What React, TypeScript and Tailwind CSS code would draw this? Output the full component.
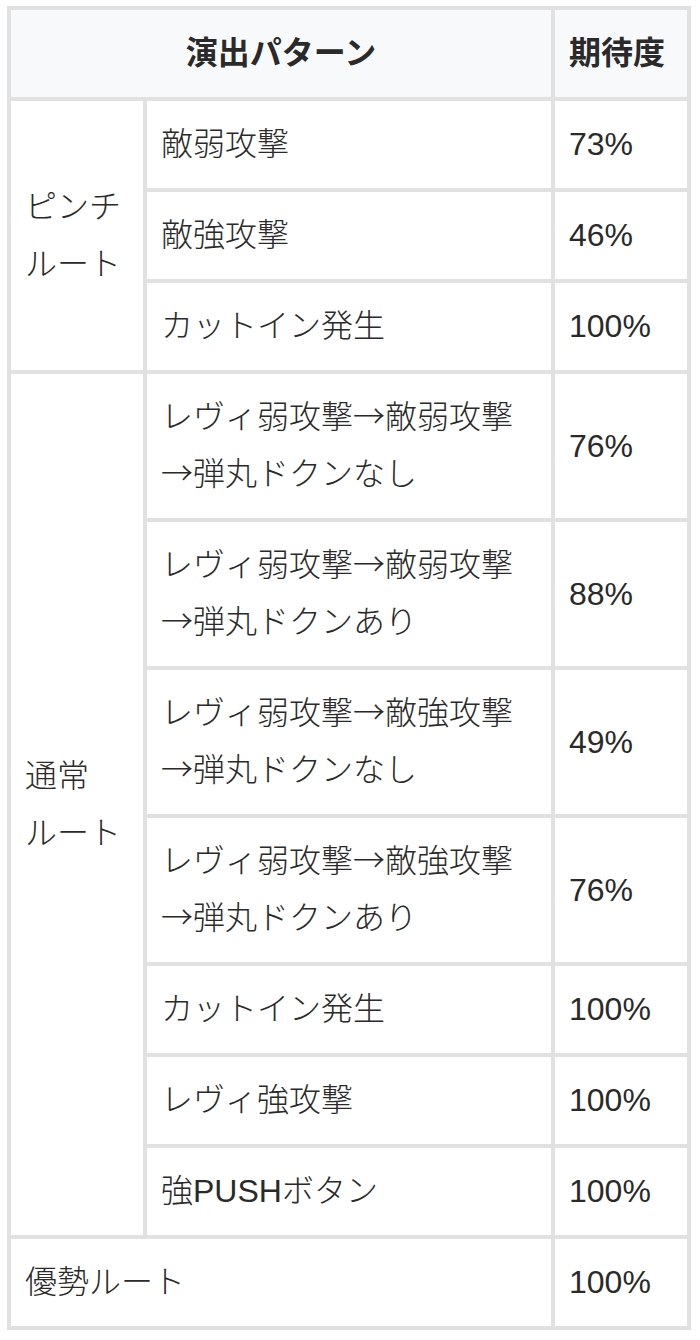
const rows: Array<{ group?: { label: string[]; span: number }; pattern: string[]; rate: string }> = [
  { group: { label: ["ピンチ", "ルート"], span: 3 }, pattern: ["敵弱攻撃"], rate: "73%" },
  { pattern: ["敵強攻撃"], rate: "46%" },
  { pattern: ["カットイン発生"], rate: "100%" },
  { group: { label: ["通常", "ルート"], span: 7 }, pattern: ["レヴィ弱攻撃→敵弱攻撃", "→弾丸ドクンなし"], rate: "76%" },
  { pattern: ["レヴィ弱攻撃→敵弱攻撃", "→弾丸ドクンあり"], rate: "88%" },
  { pattern: ["レヴィ弱攻撃→敵強攻撃", "→弾丸ドクンなし"], rate: "49%" },
  { pattern: ["レヴィ弱攻撃→敵強攻撃", "→弾丸ドクンあり"], rate: "76%" },
  { pattern: ["カットイン発生"], rate: "100%" },
  { pattern: ["レヴィ強攻撃"], rate: "100%" },
  { pattern: ["強PUSHボタン"], rate: "100%" },
];

const cell = "border-r-4 border-b-4 border-[#e1e1e1] px-[14px] py-[15px] align-middle";

// arrows come out tiny in Liberation Sans, so give them the CJK font
function Text({ text }: { text: string }) {
  const parts = text.split("→");
  return (
    <>
      {parts.map((p, i) => (
        <span key={i}>
          {i > 0 && (
            <span className="leading-none" style={{ fontFamily: '"Noto Sans CJK JP", sans-serif' }}>
              →
            </span>
          )}
          {p}
        </span>
      ))}
    </>
  );
}

function Lines({ lines }: { lines: string[] }) {
  return (
    <>
      {lines.map((l, i) => (
        <span key={i}>
          {i > 0 && <br />}
          <Text text={l} />
        </span>
      ))}
    </>
  );
}

export default function App() {
  return (
    <div className="bg-white w-[700px] h-[1340px] pt-[6px] pl-[7px]">
      <table
        className="w-[684px] border-separate border-spacing-0 border-l-4 border-t-4 border-[#e1e1e1] text-[32px] leading-[57px] text-[#2a2a2a] table-fixed"
        style={{ fontFamily: '"Liberation Sans", "Noto Sans CJK JP", sans-serif' }}
      >
        <colgroup>
          <col className="w-[136px]" />
          <col className="w-[408px]" />
          <col className="w-[136px]" />
        </colgroup>
        <thead>
          <tr className="bg-[#f8f9fa]">
            <th colSpan={2} className={`${cell} text-center font-bold`}>
              演出パターン
            </th>
            <th className={`${cell} text-left font-bold`}>期待度</th>
          </tr>
        </thead>
        <tbody className="font-light">
          {rows.map((r, i) => (
            <tr key={i}>
              {r.group && (
                <td rowSpan={r.group.span} className={`${cell} text-left`}>
                  <Lines lines={r.group.label} />
                </td>
              )}
              <td className={cell}>
                <Lines lines={r.pattern} />
              </td>
              <td className={cell}>{r.rate}</td>
            </tr>
          ))}
          <tr>
            <td colSpan={2} className={cell}>
              優勢ルート
            </td>
            <td className={cell}>100%</td>
          </tr>
        </tbody>
      </table>
    </div>
  );
}
